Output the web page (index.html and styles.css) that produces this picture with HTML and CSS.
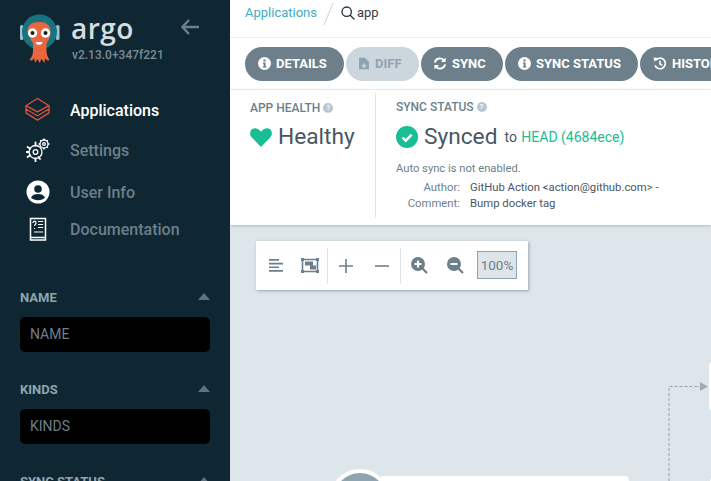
FILE: index.html
```html
<!DOCTYPE html>
<html lang="en">
<head>
<meta charset="utf-8">
<title>Argo CD</title>
<link rel="stylesheet" href="styles.css">
</head>
<body>
<div class="app">
  <aside class="sidebar">
    <div class="brand">
      <svg class="logo" viewBox="0 0 40 50" width="40" height="50">
        <rect x="0" y="11" width="3.500" height="15" rx="1.500" fill="#9cc0cf"/>
        <rect x="36" y="11" width="3.500" height="15" rx="1.500" fill="#9cc0cf"/>
        <circle cx="19.500" cy="18" r="17.500" fill="#17747f"/>
        <path d="M7.500 18c0-7 4-10 11.500-10s11.500 3 11.500 10c0 6-2.500 9-4 11v8c0 4 1.500 6 3 9-2 1-3.500 0-4.500-2l-.5 5-3-4-2 4-2-4-2.500 4-.8-5c-1 2-2.500 3-4.700 2 2-3 3.500-5 3.500-9v-8c-1.500-2-4-5-4-11z" fill="#e9673f"/>
        <circle cx="12.500" cy="19" r="4.700" fill="#fff"/><circle cx="25.500" cy="19" r="4.700" fill="#fff"/>
        <circle cx="12.500" cy="19" r="2" fill="#1c1c1c"/><circle cx="25.500" cy="19" r="2" fill="#1c1c1c"/>
        <path d="M15.500 28h7c-.8 3.800-6.200 3.800-7 0z" fill="#fff"/>
      </svg>
      <div class="brand-text">
        <div class="wordmark">argo</div>
        <div class="version">v2.13.0+347f221</div>
      </div>
      <svg class="collapse" viewBox="0 0 18 16" width="18" height="16"><path d="M8 1 1.500 8 8 15M2 8h16" fill="none" stroke="#6d7f8b" stroke-width="2.400"/></svg>
    </div>
    <nav class="nav">
      <div class="nav-item active nav-apps">
        <svg viewBox="0 0 26 26" width="26" height="26" fill="none" stroke="#e0533a" stroke-width="1.300" stroke-linejoin="round"><path d="M13 1 25 8.500 13 15 1 8.500z"/><path d="M1 8.500v3.500l12 7 12-7V8.500M1 12v4l12 7.500L25 16v-4"/></svg>
        <span>Applications</span>
      </div>
      <div class="nav-item nav-settings">
        <svg viewBox="0 0 24 24" width="24" height="24" fill="none" stroke="#fff" stroke-width="1.300"><circle cx="9.500" cy="14" r="6.500"/><circle cx="9.500" cy="14" r="2.300"/><path d="M9.500 4.500v3M9.500 20.500v3M.5 14h2.500M1.500 9l2.800 1.800M1.500 19l2.800-1.800M14 21l-1.500-2" stroke-linecap="round" stroke-width="1.800"/><circle cx="18" cy="6" r="4"/><circle cx="18" cy="6" r="1.400"/><path d="M18 .5v1.500M18 10v1.500M12.500 6H14M22 6h1.500M14.200 2.200l1 1M21.800 2.200l-1 1M21.800 9.800l-1-1" stroke-width="1.500"/></svg>
        <span>Settings</span>
      </div>
      <div class="nav-item nav-user">
        <svg viewBox="0 0 24 24" width="24" height="24"><circle cx="12" cy="12" r="11.500" fill="#fff"/><circle cx="12" cy="9" r="3.800" fill="#0f2733"/><path d="M5 17.500c1-2.500 4-3.500 7-3.500s6 1 7 3.500c-1.500 1.700-4 2.700-7 2.700s-5.500-1-7-2.700z" fill="#0f2733"/></svg>
        <span>User Info</span>
      </div>
      <div class="nav-item nav-docs">
        <svg viewBox="0 0 24 24" width="24" height="24" fill="none" stroke="#fff" stroke-width="1.500"><path d="M4.500 1.500h15v19h-15zM4.500 20.500v2.500h15v-2.500"/><path d="M7 6c0-2.500 3-2.500 3 0 0 1.500-1.500 1.500-1.500 3M8.500 11v1M12 4.500h5M12 7.500h5M12 10.500h5M8 15h9" stroke-width="1.200"/></svg>
        <span>Documentation</span>
      </div>
    </nav>
    <section class="filter">
      <div class="filter-head"><span>NAME</span><i class="caret"></i></div>
      <div class="filter-input">NAME</div>
    </section>
    <section class="filter">
      <div class="filter-head"><span>KINDS</span><i class="caret"></i></div>
      <div class="filter-input">KINDS</div>
    </section>
    <section class="filter">
      <div class="filter-head"><span>SYNC STATUS</span><i class="caret"></i></div>
    </section>
  </aside>

  <main class="main">
    <header class="crumbs">
      <span class="crumb-link">Applications</span>
      <span class="crumb-slash"></span>
      <svg class="crumb-search" viewBox="0 0 14 14" width="14" height="14" fill="none" stroke="#1f2f38" stroke-width="1.300"><circle cx="5.700" cy="5.700" r="4.700"/><path d="m9 9 4.500 4.500"/></svg>
      <span class="crumb-current">app</span>
    </header>

    <div class="actions">
      <button class="btn btn-details"><svg viewBox="0 0 14 14" width="13" height="13"><circle cx="7" cy="7" r="7" fill="#fff"/><path d="M5.800 2.800h2.400v2H5.800zM5.300 6h2.900v4h.8v1.300H5.300V10h.8V7.300h-.8z" fill="#6d7f8b"/></svg>DETAILS</button>
      <button class="btn btn-diff" disabled><svg viewBox="0 0 12 14" width="10" height="13"><path d="M0 0h7l5 5v9H0z" fill="#8fa4b1"/><path d="M5 7h2v2h2v1.500H7v2H5v-2H3V9h2z" fill="#ccd6dd"/></svg>DIFF</button>
      <button class="btn btn-sync"><svg viewBox="0 0 14 14" width="14" height="13" fill="none" stroke="#fff" stroke-width="2"><path d="M1.500 6A5.500 5.500 0 0 1 11.500 4M12.500 8A5.500 5.500 0 0 1 2.500 10"/><path d="M13 .5v5H8zM1 13.500v-5h5z" fill="#fff" stroke="none"/></svg>SYNC</button>
      <button class="btn btn-status"><svg viewBox="0 0 14 14" width="13" height="13"><circle cx="7" cy="7" r="7" fill="#fff"/><path d="M5.800 2.800h2.400v2H5.800zM5.300 6h2.900v4h.8v1.300H5.300V10h.8V7.300h-.8z" fill="#6d7f8b"/></svg>SYNC STATUS</button>
      <button class="btn btn-history"><svg viewBox="0 0 14 14" width="14" height="13" fill="none" stroke="#fff" stroke-width="1.800"><path d="M2.500 3.500A5.700 5.700 0 1 1 1.700 9M7 4v3.500l2.500 1.500"/><path d="M0 .5 5 1 1 5z" fill="#fff" stroke="none"/></svg>HISTORY AND ROLLBACK</button>
    </div>

    <section class="status">
      <div class="status-health">
        <h3 class="status-title">APP HEALTH <i class="help">?</i></h3>
        <div class="status-main">
          <svg viewBox="0 0 24 21" width="22" height="19"><path d="M12 21 1.800 10.500C-1 7.500-.3 3.500 2 1.500 4.700-.7 8.500 0 12 4c3.500-4 7.300-4.700 10-2.500 2.300 2 3 6 .2 9z" fill="#18be94"/></svg>
          <span class="status-word">Healthy</span>
        </div>
      </div>
      <div class="status-sync">
        <h3 class="status-title">SYNC STATUS <i class="help">?</i></h3>
        <div class="status-main sync-main">
          <svg viewBox="0 0 22 22" width="22" height="22"><circle cx="11" cy="11" r="11" fill="#18be94"/><path d="m6.500 11.500 3.200 3.200 6-6" fill="none" stroke="#fff" stroke-width="2.400"/></svg>
          <span class="status-word">Synced</span>
          <span class="sync-to">to <b class="sync-rev">HEAD (4684ece)</b></span>
        </div>
        <p class="sync-note">Auto sync is not enabled.</p>
        <dl class="meta">
          <dt>Author:</dt><dd>GitHub Action &lt;action@github.com&gt; -</dd>
          <dt>Comment:</dt><dd>Bump docker tag</dd>
        </dl>
      </div>
    </section>

    <section class="graph">
      <div class="graph-tools">
        <div class="tool-group">
          <svg viewBox="0 0 15 13" width="15" height="13" fill="#6d7f8b"><path d="M0 0h10v1.700H0zM0 3.700h14v1.700H0zM0 7.400h10v1.700H0zM0 11.100h14v1.700H0z"/></svg>
          <svg viewBox="0 0 18 15" width="18" height="15"><path d="M1.500 1.500h15v12h-15z" fill="none" stroke="#6d7f8b" stroke-width="1.600"/><path d="M0 0h3v3H0zM15 0h3v3h-3zM0 12h3v3H0zM15 12h3v3h-3zM4 3.500h8v4h3v4H9v-4H4z" fill="#6d7f8b"/></svg>
        </div>
        <div class="tool-group">
          <svg viewBox="0 0 14 14" width="14" height="14" fill="#6d7f8b"><path d="M6.200 0h1.600v6.200H14v1.600H7.800V14H6.200V7.800H0V6.200h6.200z"/></svg>
          <svg viewBox="0 0 14 14" width="14" height="14" fill="#6d7f8b"><path d="M0 6.200h14v1.600H0z"/></svg>
        </div>
        <div class="tool-group zoom-group">
          <svg viewBox="0 0 17 17" width="17" height="17"><circle cx="7" cy="7" r="7" fill="#6d7f8b"/><path d="m11.500 11.500 4.500 4.500" stroke="#6d7f8b" stroke-width="2.200"/><path d="M6 3.500h2V6h2.500v2H8v2.500H6V8H3.500V6H6z" fill="#fff"/></svg>
          <svg viewBox="0 0 17 17" width="17" height="17"><circle cx="7" cy="7" r="7" fill="#6d7f8b"/><path d="m11.500 11.500 4.500 4.500" stroke="#6d7f8b" stroke-width="2.200"/><path d="M3.500 6h7v2h-7z" fill="#fff"/></svg>
          <span class="zoom-level">100%</span>
        </div>
      </div>

      <svg class="edge" viewBox="0 0 44 100" width="44" height="100"><path d="M1 100V.5H38" fill="none" stroke="#8fa4b1" stroke-dasharray="3 2"/><path d="M32-4 40 .5 32 5z" fill="#a9a9a9"/></svg>
      <div class="node node-main"></div>
      <div class="node-disc"></div>
      <div class="node node-side"></div>
      <div class="node node-side-low"></div>
    </section>
  </main>
</div>
</body>
</html>
```
FILE: styles.css
```css
* { box-sizing: border-box; }
html, body { margin: 0; height: 100%; overflow: hidden; }
body { font-family: Roboto, "Liberation Sans", sans-serif; color: #495763; background: #fff; }
.app { display: flex; width: 711px; height: 481px; overflow: hidden; }

.sidebar { flex: 0 0 230px; height: 481px; overflow: hidden; background: #0f2733; padding: 14px 20px 0; }
.brand { display: flex; align-items: flex-start; height: 52px; }
.logo { flex: none; margin-right: 12px; }
.brand-text { width: 98px; }
.wordmark { font-family: "Open Sans", Lato, sans-serif; font-size: 28px; line-height: 28px; color: #d8dcde; font-weight: 600; margin: 0 0 0 -1px; letter-spacing: .5px; }
.version { font-size: 12px; line-height: 14px; font-weight: 500; color: #7c8b95; margin-top: 6px; white-space: nowrap; }
.collapse { margin: 5px 0 0 11px; flex: none; }

.nav { margin-top: 32px; }
.nav-item { display: flex; align-items: center; font-size: 16px; font-weight: 500; color: #6d7f8b; height: 24px; }
.nav-item svg { flex: none; margin: 0 20px 0 6px; width: 24px; }
.nav-item.active { color: #fff; }
.nav-apps svg { margin: 0 20px 0 5px; width: 25px; }
.nav-settings { margin-top: 16px; }
.nav-user { margin-top: 18px; }
.nav-docs { margin-top: 13px; }

.filter-head { display: flex; justify-content: space-between; align-items: center; font-size: 13px; font-weight: 700; color: #8fa4b1; height: 16px; }
.filter:nth-of-type(1) { margin-top: 48px; }
.caret { width: 0; height: 0; border-left: 6.500px solid transparent; border-right: 6.500px solid transparent; border-bottom: 7px solid #5f7280; margin-top: -2px; }
.filter-input { margin-top: 12px; margin-bottom: 29px; height: 35px; background: #000; border-radius: 5px; padding: 0 10px; font-size: 14px; line-height: 35px; color: #6d7f8b; }

.main { flex: 1; min-width: 0; height: 481px; display: flex; flex-direction: column; position: relative; overflow: hidden; }
.crumbs { flex: 0 0 38px; display: flex; align-items: flex-start; padding: 5px 0 0 15px; font-size: 13px; line-height: 16px; background: #fff; border-bottom: 1px solid #eef1f3; }
.crumb-link { color: #3eabc6; }
.crumb-slash { width: 1px; height: 24px; background: #c9d3da; transform: rotate(22deg); margin: -3px 12px 0 11px; }
.crumb-search { margin: 1px 2px 0 0; }
.crumb-current { color: #363c4a; }

.actions { flex: 0 0 52px; display: flex; gap: 2px; padding: 9px 0 0 15px; background: #fff; border-bottom: 1px solid #eef1f3; overflow: hidden; }
.btn { flex: none; display: flex; align-items: center; justify-content: flex-start; gap: 5px; height: 34px; padding: 0 0 1px 13px; border: 0; border-radius: 17px; background: #6d7f8b; color: #fff; font: 700 13px/1 Roboto, sans-serif; white-space: nowrap; }
.btn-details { width: 99px; }
.btn-diff { width: 73px; background: #ccd6dd; color: #8fa4b1; gap: 6px; }
.btn-sync { width: 82px; padding-left: 12px; }
.btn-status { width: 133px; }
.btn-history { width: 190px; }

.status { flex: 0 0 135px; display: flex; padding-top: 3px; background: #fff; position: relative; z-index: 1; box-shadow: 0 1px 3px rgba(90, 110, 125, .35); }
.status-health { flex: 0 0 146px; height: 125px; padding: 8px 0 0 20px; border-right: 1px solid #dee6eb; }
.status-sync { padding: 7px 0 0 20px; }
.status-title { margin: 0; font-size: 12px; line-height: 14px; font-weight: 500; color: #6d7f8b; display: flex; align-items: center; gap: 3px; }
.help { width: 10px; height: 10px; border-radius: 50%; background: #b9c6cf; color: #fff; font: 700 7px/10px Roboto, sans-serif; text-align: center; }
.status-main { display: flex; align-items: center; gap: 6px; height: 28px; margin-top: 8px; }
.sync-main { margin-top: 9px; }
.status-word { font-size: 22.700px; line-height: 28px; color: #495763; }
.sync-to { font-size: 14px; color: #495763; margin-left: 1px; }
.sync-rev { font-weight: 400; color: #18be94; margin-left: 1px; }
.sync-note { margin: 11px 0 0; font-size: 11.200px; line-height: 14px; color: #6d7f8b; }
.meta { display: grid; grid-template-columns: 64px auto; column-gap: 10px; row-gap: 2px; margin: 5px 0 0; font-size: 11.300px; line-height: 14px; }
.meta dt { text-align: right; color: #6d7f8b; }
.meta dd { margin: 0; color: #495763; white-space: nowrap; }

.graph { flex: 1; min-height: 0; position: relative; background: #dee6eb; overflow: hidden; }
.graph-tools { position: absolute; left: 26px; top: 16px; width: 272px; height: 49px; display: flex; align-items: center; background: #fff; box-shadow: 1px 1px 3px rgba(90, 110, 125, .55); }
.tool-group { display: flex; align-items: center; height: 36px; border-right: 1px solid #dee6eb; }
.tool-group:nth-child(1) { flex: 0 0 72px; gap: 17px; padding-left: 13px; }
.tool-group:nth-child(2) { flex: 0 0 73px; gap: 22px; padding-left: 11px; }
.zoom-group { border-right: 0; gap: 19px; padding-left: 10px; }
.zoom-level { margin: 0 0 2px -6px; width: 40px; height: 28px; border: 1px solid #8fa4b1; background: #dfe4e8; color: #6d7f8b; font-size: 13.500px; line-height: 26px; text-align: center; }
.edge { position: absolute; left: 438px; top: 161px; overflow: visible; }
.node { position: absolute; background: #fff; border-radius: 4px; }
.node-main { left: 150px; top: 251px; width: 249px; height: 60px; }
.node-side { left: 479px; top: 137px; width: 60px; height: 49px; }
.node-side-low { left: 480px; top: 252px; width: 60px; height: 60px; }
.node-disc { position: absolute; left: 100px; top: 244px; width: 60px; height: 60px; border-radius: 50%; background: #8fa4b1; border: 4px solid #fff; z-index: 1; }
```
